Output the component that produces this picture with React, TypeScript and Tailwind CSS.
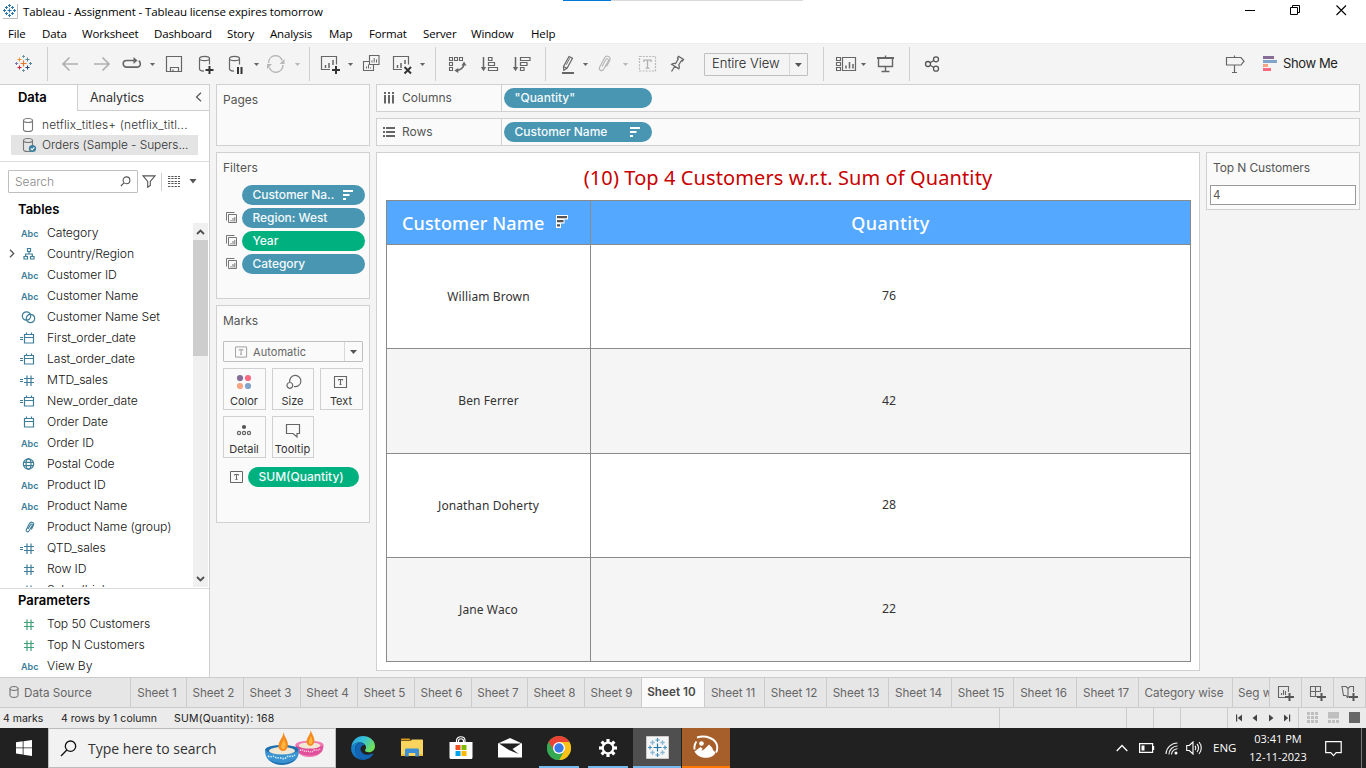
import type { ReactNode } from 'react';

/* ---------- shared pieces ---------- */

function Ico({ className = '', children, w = 24, h = 24 }: { className?: string; children: ReactNode; w?: number; h?: number }) {
  return (
    <svg width={w} height={h} viewBox={`0 0 ${w} ${h}`} fill="none" stroke="#666" strokeWidth="1.2" className={`shrink-0 ${className}`}>
      {children}
    </svg>
  );
}

function Caret({ className = '', color = '#666' }: { className?: string; color?: string }) {
  return (
    <svg width="8" height="24" viewBox="0 0 8 24" className={`shrink-0 ${className}`}>
      <path d="M1.9 11h5.2L4.5 14z" fill={color} />
    </svg>
  );
}

function Sep({ className }: { className: string }) {
  return <div className={`h-[34px] w-px shrink-0 bg-[#cfcfcf] ${className}`} />;
}

function SortBars({ className = '' }: { className?: string }) {
  return (
    <svg width="10" height="10" viewBox="0 0 10 10" className={`shrink-0 ${className}`} fill="#fff">
      <path d="M0 0h10v2H0zM0 4h6.5v2H0zM0 8h3v2H0z" />
    </svg>
  );
}

const plus = (x: number, y: number, s: number, color: string, c: string, w = 1) => (
  <path key={c} d={`M${x - s} ${y}h${2 * s}M${x} ${y - s}v${2 * s}`} stroke={color} strokeWidth={w} />
);

/* ---------- window chrome ---------- */

function TitleBar() {
  return (
    <div className="relative flex h-[23px] shrink-0 items-center bg-white">
      <div className="absolute left-[563px] top-0 h-px w-[48px] bg-[#0078d7]" />
      <div className="absolute left-[611px] top-0 h-px w-[192px] bg-[#d9d9d9]" />
      <svg width="15" height="15" viewBox="0 0 15 15" className="ml-[3px] shrink-0" fill="none">
        <path d="M0 14.5h14.5V0" stroke="#bbb" />
        {plus(6.5, 6.5, 2, '#2f76a8', 'a', 1.2)}
        {plus(6.5, 1.5, 1.5, '#2f76a8', 'b')}
        {plus(6.5, 11.5, 1.5, '#2f76a8', 'c')}
        {plus(1.5, 6.5, 1.5, '#2f76a8', 'd')}
        {plus(11.5, 6.5, 1.5, '#2f76a8', 'e')}
        {plus(3.5, 3.5, 1.5, '#2f76a8', 'f')}
        {plus(9.5, 3.5, 1.5, '#2f76a8', 'g')}
        {plus(3.5, 9.5, 1.5, '#2f76a8', 'h')}
        {plus(9.5, 9.5, 1.5, '#2f76a8', 'i')}
      </svg>
      <span className="ml-[5px] whitespace-nowrap text-[11.5px] tracking-[-0.11px] text-black">
        Tableau - Assignment - Tableau license expires tomorrow
      </span>
      <svg width="104" height="12" viewBox="0 0 104 12" className="mb-[3px] ml-auto mr-[18px] shrink-0" fill="none" stroke="#000">
        <path d="M1 6.5h10" />
        <path d="M46.5 3.5h7v7h-7zM48.5 3.5v-2h7v7h-2" />
        <path d="M92.5 1.5l9.500 9.500M102 1.500l-9.500 9.500" strokeWidth="1.100" />
      </svg>
    </div>
  );
}

function MenuBar() {
  return (
    <div className="flex h-[20px] shrink-0 items-center bg-white pl-[8px] pt-px text-[11.5px] tracking-[-0.15px] text-black">
      <span className="w-[34px]">File</span>
      <span className="w-[40px]">Data</span>
      <span className="w-[72px]">Worksheet</span>
      <span className="w-[73px]">Dashboard</span>
      <span className="w-[43px]">Story</span>
      <span className="w-[59px]">Analysis</span>
      <span className="w-[40px]">Map</span>
      <span className="w-[54px]">Format</span>
      <span className="w-[48px]">Server</span>
      <span className="w-[60px]">Window</span>
      <span>Help</span>
    </div>
  );
}

const cylinder = 'M5.500 6.500c0-1.400 2.400-2.200 5-2.200s5 .8 5 2.200-2.400 2.200-5 2.200-5-.8-5-2.200zM5.500 6.500v10.500c0 1.100 1.800 2 4.500 2.100M15.500 6.500v6';

function Toolbar() {
  return (
    <div className="flex h-[41px] shrink-0 items-center border-t border-[#eee] bg-[#f4f4f4]">
      <Ico className="ml-[11px]">
        {plus(12.5, 11.5, 3, '#e8762d', 'a', 1.2)}
        {plus(8.5, 7.5, 2, '#eb9136', 'b')}
        {plus(16.5, 7.5, 2, '#5b879b', 'c')}
        {plus(8.5, 15.5, 2, '#c72035', 'd')}
        {plus(16.5, 15.5, 2, '#1f447e', 'e')}
        {plus(12.5, 4.5, 1.5, '#7199a6', 'f')}
        {plus(12.5, 18.5, 1.5, '#7199a6', 'g')}
        {plus(5.5, 11.5, 1.5, '#7a77b0', 'h')}
        {plus(19.5, 11.5, 1.500, '#59879b', 'i')}
      </Ico>
      <Sep className="ml-[12px]" />
      <Ico className="ml-[10px]"><path d="M20 12H5M11.500 5.500L5 12l6.500 6.500" stroke="#b0b0b0" strokeWidth="1.700" /></Ico>
      <Ico className="ml-[8px]"><path d="M4 12h15M12.500 5.500L19 12l-6.500 6.500" stroke="#b0b0b0" strokeWidth="1.700" /></Ico>
      <Ico className="ml-[6px]">
        <path d="M15.500 8.500H6.500a3.300 3.300 0 0 0 0 6.600h11a3 3 0 0 0 2.800-3.300c0-1.400-.6-2.400-1.600-3" strokeWidth="1.600" />
        <path d="M13.500 5v7l4-3.500z" fill="#666" stroke="none" />
      </Ico>
      <Caret className="ml-[4px]" />
      <Ico className="ml-[6px]">
        <path d="M4.500 4.500h15v15h-15z" />
        <path d="M8.500 19.500v-4h8v4M11 19.500v-2" />
      </Ico>
      <Ico className="ml-[8px]">
        <path d={cylinder} />
        <path d="M11.500 18h8M15.500 14v8" stroke="#333" strokeWidth="2" />
      </Ico>
      <Ico className="ml-[6px]">
        <path d={cylinder} />
        <path d="M14 15v7M17.500 15v7" stroke="#333" strokeWidth="2" />
      </Ico>
      <Caret className="ml-[4px]" />
      <Ico className="ml-[4px]">
        <path d="M4.600 11a7 7 0 0 1 13.600-2.600M18.900 13a7 7 0 0 1-13.600 2.600" stroke="#b8b8b8" strokeWidth="1.500" />
        <path d="M20.500 7v5h-5zM3 17v-5h5z" fill="#b8b8b8" stroke="none" />
      </Ico>
      <Caret className="ml-[5px]" color="#b8b8b8" />
      <Sep className="ml-[8px]" />
      <Ico className="ml-[8px]">
        <path d="M12 17.500H3.500v-13h15v8" />
        <path d="M7.500 16v-3M11 16v-5M15 13V8" strokeWidth="1.500" />
        <path d="M14 18h8M18 14v8" stroke="#333" strokeWidth="2" />
      </Ico>
      <Caret className="ml-[4px]" />
      <Ico className="ml-[5px]">
        <path d="M10.500 3.500h9.500v9h-9.500zM10 9.500H4.500v9h10V13" strokeWidth="1.100" />
        <path d="M13 10.500V8.500M15.200 10.500V6M17.500 10.500V7.500M7.500 16.500v-2M9.500 16.500v-4M11.500 16.500v-1" strokeWidth="1" />
      </Ico>
      <Ico className="ml-[7px]">
        <path d="M12 17.500H3.500v-13h15v8" />
        <path d="M7.500 16v-3M11 16v-5M15 12V8" strokeWidth="1.500" />
        <path d="M14.500 15l6.500 6.500M21 15l-6.500 6.500" stroke="#333" strokeWidth="2" />
      </Ico>
      <Caret className="ml-[4px]" />
      <Sep className="ml-[9px]" />
      <Ico className="ml-[9px]">
        <path d="M4.500 5.500h3v3h-3zM9.500 5.500h3v3h-3zM14.500 5.500h3v3h-3zM4.500 10.500h3v3h-3zM4.500 15.500h3v3h-3z" strokeWidth="1.100" />
        <path d="M11 18.500c4 0 8-2.500 8-7" strokeWidth="1.500" />
        <path d="M13.300 16v5l-4-2.500zM16.500 13.500h5l-2.500-4z" fill="#666" stroke="none" />
      </Ico>
      <Ico className="ml-[9px]">
        <path d="M5.500 5v12" strokeWidth="1.500" />
        <path d="M2.800 15h5.400l-2.700 4.300z" fill="#666" stroke="none" />
        <path d="M10.500 5.500h3.500v3h-3.500zM10.500 10.500h6v3h-6zM10.500 15.500h9v3h-9z" />
      </Ico>
      <Ico className="ml-[8px]">
        <path d="M5.500 5v12" strokeWidth="1.500" />
        <path d="M2.800 15h5.400l-2.700 4.300z" fill="#666" stroke="none" />
        <path d="M10.500 5.500h9.500v3h-9.500zM10.500 10.500h6.500v3h-6.500zM10.500 15.500h3.500v3h-3.500z" />
      </Ico>
      <Sep className="ml-[11px]" />
      <Ico className="ml-[10px]">
        <path d="M7.500 14.500l5.500-10 3.500 1.800-5.500 10-3.200 2zM7.500 14.500l3.500 1.800" />
        <path d="M10.200 12.800l3.600-6.600" strokeWidth=".9" />
        <path d="M6 21h12" strokeWidth="2" />
      </Ico>
      <Caret className="ml-[1px]" />
      <Ico className="ml-[4px]">
        <path d="M9 14.500l3.700-6.700c1.200-2 3.600-.7 2.600 1.300l-4.600 8c-1.900 3-5.500 1-4-2L11.500 6c2-3.500 7-1.200 5.300 2.400L13.500 14.500" stroke="#b8b8b8" strokeWidth="1.200" />
      </Ico>
      <Caret className="ml-[4px]" color="#b8b8b8" />
      <Ico className="ml-[6px]">
        <path d="M4.500 4.500h16v14.500h-16z" stroke="#b8b8b8" strokeDasharray="2 1.200" />
        <path d="M9 10V8.200h7V10M12.500 8.200v8M10.500 16.200h4" stroke="#b0b0b0" strokeWidth="1.300" />
      </Ico>
      <Ico className="ml-[6px]">
        <path d="M13.500 4.300l5 3.200-1 1.400-.9-.4-2.800 4.200c.8 1.600.6 2.900 0 4.200L6.600 12.300c1.200-.8 2.400-1.200 4-.8l2.600-4.400-.7-1.200zM9.700 14.500L6.500 19.500" strokeWidth="1.300" />
      </Ico>
      <div className="ml-[15px] flex h-[23px] w-[104px] shrink-0 items-center rounded-[1px] border border-[#bfbfbf]">
        <span className="w-[85px] whitespace-nowrap pl-[7px] text-[13px] font-light text-[#222]">Entire View</span>
        <span className="h-full w-px bg-[#d8d8d8]" />
        <svg width="17" height="21" viewBox="0 0 17 21"><path d="M5 9h7l-3.500 4z" fill="#555" /></svg>
      </div>
      <Sep className="ml-[15px]" />
      <Ico className="ml-[10px]">
        <path d="M2.500 5.500h4v3h-4zM2.500 10.500h4v3h-4zM2.500 15.500h4v3h-4z" strokeWidth="1.100" />
        <path d="M8.500 5.500h13v13H8.500z" />
        <path d="M12 16.500v-3M15.500 16.500v-6.500M19 16.500V12" strokeWidth="1.500" />
      </Ico>
      <Caret className="ml-[1px]" />
      <Ico className="ml-[6px]">
        <path d="M4 6h17" strokeWidth="2" />
        <path d="M5.500 6v8.500h14V6M12.500 3.500V5M12.500 14.500V19M8.500 19.500h8" strokeWidth="1.400" />
      </Ico>
      <Sep className="ml-[12px]" />
      <Ico className="ml-[10px]">
        <g stroke="#555" strokeWidth="1.300">
          <circle cx="8" cy="12" r="2.500" /><circle cx="16" cy="7.300" r="2.500" /><circle cx="16" cy="16.700" r="2.500" />
          <path d="M10.200 10.700l3.600-2.200M10.200 13.300l3.600 2.200" />
        </g>
      </Ico>
      <Ico className="ml-[279px]">
        <path d="M3.500 5.500h14.500l3 3.700-3 3.800H3.500zM11.500 3.500v2M11.500 13v7.500M9 20.500h5" />
      </Ico>
      <svg width="24" height="24" viewBox="0 0 24 24" className="ml-[13px] shrink-0">
        <path d="M3 4h11v3H3z" fill="#856d96" /><path d="M3 8h14v3H3z" fill="#82a4cb" />
        <path d="M3 12h5v3H3z" fill="#f7a582" /><path d="M3 16h8v3H3z" fill="#fb6a80" />
      </svg>
      <span className="ml-[-1px] whitespace-nowrap text-[13px] tracking-[-0.38px] text-[#222]">Show Me</span>
    </div>
  );
}

/* ---------- data pane ---------- */

type Kind = 'abc' | 'geo' | 'set' | 'cdate' | 'cnum' | 'date' | 'globe' | 'clip' | 'num';

function FieldIcon({ kind, color = '#3e7e98' }: { kind: Kind; color?: string }) {
  if (kind === 'abc')
    return <span className="w-[19px] pl-px pt-[2px] text-[9px] font-semibold text-[#3e7e98]">Abc</span>;
  return (
    <svg width="19" height="16" viewBox="0 0 19 16" fill="none" stroke={color} strokeWidth="1.200" className="shrink-0">
      {(kind === 'cdate' || kind === 'cnum') && <path d="M0 7.500h3M0 9.500h3" strokeWidth="1" />}
      {(kind === 'date' || kind === 'cdate') && <path d="M4.500 4.500h9v8.500h-9zM4.500 7.500h9M6.500 2.500v2M11.500 2.500v2" />}
      {(kind === 'num' || kind === 'cnum') && <path d="M4 6.500h10M4 10.500h10M7 3.500v10.500M11 3.500v10.500" />}
      {kind === 'geo' && <path d="M7.500 2.500h3v3h-3zM4 10.500h3.500v2.500H4zM10.500 10.500H14v2.500h-3.500zM9 5.500v2.500M5.700 10.500V8h6.600v2.500" />}
      {kind === 'set' && <><circle cx="6.500" cy="7" r="4.200" /><circle cx="10.500" cy="9.500" r="4.200" /></>}
      {kind === 'globe' && <><circle cx="8.500" cy="8" r="5.200" /><ellipse cx="8.500" cy="8" rx="2.500" ry="5.200" /><path d="M4 6.300h9M4 9.700h9" /></>}
      {kind === 'clip' && <path d="M8 10l2.500-4.300c.8-1.300 2.300-.5 1.700.8L9.200 11.800c-1.300 2-3.800.6-2.800-1.400l3-5.800c1.600-2.700 5.200-1 4 1.700l-2 4.200" strokeWidth="1.100" />}
    </svg>
  );
}

const FIELDS: [Kind, string][] = [
  ['abc', 'Category'], ['geo', 'Country/Region'], ['abc', 'Customer ID'], ['abc', 'Customer Name'],
  ['set', 'Customer Name Set'], ['cdate', 'First_order_date'], ['cdate', 'Last_order_date'], ['cnum', 'MTD_sales'],
  ['cdate', 'New_order_date'], ['date', 'Order Date'], ['abc', 'Order ID'], ['globe', 'Postal Code'],
  ['abc', 'Product ID'], ['abc', 'Product Name'], ['clip', 'Product Name (group)'], ['cnum', 'QTD_sales'],
  ['num', 'Row ID'], ['num', 'Sales (bin)'],
];

function Field({ kind, name, color }: { kind: Kind; name: string; color?: string }) {
  return (
    <div className="flex h-[21px] shrink-0 items-center">
      <div className="w-[20px] shrink-0 pl-[8px]">
        {kind === 'geo' && <svg width="8" height="9" viewBox="0 0 8 9"><path d="M2 .8l3.700 3.700L2 8.200" fill="none" stroke="#555" strokeWidth="1.300" /></svg>}
      </div>
      <FieldIcon kind={kind} color={color} />
      <span className="ml-[8px] whitespace-nowrap pt-[2px] text-[12.2px] font-light tracking-[-0.08px] text-[#111]">{name}</span>
    </div>
  );
}

function DbIcon({ checked = false }: { checked?: boolean }) {
  return (
    <svg width="15" height="16" viewBox="0 0 15 16" fill="none" stroke="#777" strokeWidth="1.100" className="shrink-0">
      <path d="M1.500 3.500c0-1.300 2-2 4.500-2s4.500.7 4.500 2-2 2-4.500 2-4.500-.7-4.500-2zM1.500 3.500v9c0 1.300 2 2 4.500 2s4.500-.7 4.500-2v-9" />
      {checked && <><circle cx="10.500" cy="11.500" r="3.600" fill="#3b7f9f" stroke="none" /><path d="M8.800 11.500l1.300 1.300 2.200-2.500" stroke="#fff" /></>}
    </svg>
  );
}

function DataPane() {
  return (
    <aside className="flex w-[210px] shrink-0 flex-col overflow-hidden border-r border-t border-[#cfcfcf] bg-white">
      <div className="flex h-[26px] shrink-0">
        <div className="flex w-[77px] items-center pl-[18px] text-[13px] font-semibold tracking-[-0.1px] text-black">Data</div>
        <div className="flex flex-1 items-center justify-between border-b border-l border-[#cfcfcf] bg-[#fafafa] pl-[12px] pr-[7px] pt-px text-[12.5px] text-[#333]">
          Analytics
          <svg width="7" height="10" viewBox="0 0 7 10" className="mb-[2px]"><path d="M6 .8L1.500 5 6 9.200" fill="none" stroke="#555" strokeWidth="1.200" /></svg>
        </div>
      </div>
      <div className="mt-[4px] flex h-[20px] shrink-0 items-center pl-[22px] text-[11.9px] text-[#333]">
        <DbIcon /><span className="ml-[5px] whitespace-nowrap font-light tracking-[0.16px]">netflix_titles+ (netflix_titl...</span>
      </div>
      <div className="ml-[11px] flex h-[20px] w-[187px] shrink-0 items-center bg-[#e4e4e4] pl-[11px] text-[11.9px] text-[#333]">
        <DbIcon checked /><span className="ml-[5px] whitespace-nowrap font-light tracking-[-0.04px]">Orders (Sample - Supers...</span>
      </div>
      <div className="mt-[6px] h-px shrink-0 bg-[#dcdcdc]" />
      <div className="mt-[8px] flex h-[23px] shrink-0 items-center pl-[8px]">
        <div className="flex h-[23px] w-[130px] items-center justify-between rounded-[1px] border border-[#bfbfbf] pl-[6px] pr-[6px] text-[12px] font-light text-[#888]">
          Search
          <svg width="11" height="11" viewBox="0 0 11 11" fill="none" stroke="#555" strokeWidth="1.100"><circle cx="6.500" cy="4.300" r="3.400" /><path d="M4 6.800L.8 10" /></svg>
        </div>
        <svg width="14" height="13" viewBox="0 0 14 13" fill="none" stroke="#555" strokeWidth="1.100" className="ml-[4px]"><path d="M1 .9h12L8.300 6.500v4l-2.600 1.800V6.500z" /></svg>
        <div className="ml-[5px] h-[18px] w-px bg-[#cfcfcf]" />
        <svg width="12" height="11" viewBox="0 0 12 11" stroke="#555" className="mb-px ml-[6px]"><path d="M0 .5h12M0 2.500h12M0 5.500h12M0 7.500h12M0 10.500h12" strokeDasharray="2.300 1" /></svg>
        <svg width="8" height="5" viewBox="0 0 8 5" className="ml-[9px]"><path d="M.5 0h7L4 4.500z" fill="#555" /></svg>
      </div>
      <div className="mt-[8px] flex h-[18px] shrink-0 items-center pl-[18px] text-[13px] font-semibold text-black">Tables</div>
      <div className="mt-[4px] flex h-[364px] shrink-0 overflow-hidden">
        <div className="-mt-px flex flex-1 flex-col overflow-hidden">
          {FIELDS.map(([k, n]) => <Field key={n} kind={k} name={n} />)}
        </div>
        <div className="mr-px flex w-[15px] shrink-0 flex-col bg-[#f0f0f0]">
          <div className="flex h-[17px] items-center justify-center"><svg width="9" height="6" viewBox="0 0 9 6"><path d="M1 5l3.500-3.500L8 5" fill="none" stroke="#505050" strokeWidth="1.800" /></svg></div>
          <div className="h-[116px] bg-[#cdcdcd]" />
          <div className="mt-auto flex h-[17px] items-center justify-center"><svg width="9" height="6" viewBox="0 0 9 6"><path d="M1 1l3.500 3.500L8 1" fill="none" stroke="#505050" strokeWidth="1.800" /></svg></div>
        </div>
      </div>
      <div className="mt-px h-px shrink-0 bg-[#dcdcdc]" />
      <div className="mt-[3px] flex h-[18px] shrink-0 items-center pl-[18px] text-[13px] font-semibold text-black">Parameters</div>
      <div className="mt-[3px]">
        <Field kind="num" name="Top 50 Customers" color="#3fa07a" />
        <Field kind="num" name="Top N Customers" color="#3fa07a" />
        <Field kind="abc" name="View By" />
      </div>
    </aside>
  );
}

/* ---------- shelves ---------- */

const SHELF = 'border border-[#d0d0d0] bg-[#fafafa]';

function Pill({ text, className, sorted = false }: { text: string; className: string; sorted?: boolean }) {
  return (
    <div className={`flex h-[20px] shrink-0 items-center justify-between whitespace-nowrap rounded-full pl-[10.5px] pr-[12px] text-[12px] font-medium text-[#f4fafc] ${className}`}>
      {text}
      {sorted && <SortBars />}
    </div>
  );
}

function FilterRow({ text, className, context = true, sorted = false }: { text: string; className: string; context?: boolean; sorted?: boolean }) {
  return (
    <div className="flex items-center">
      <svg width="12" height="12" viewBox="0 0 12 12" fill="none" stroke="#777" className="ml-[9px] mr-[4px] shrink-0">
        {context && <path d="M.5 8.500v-8h8M2.500 10.500v-8h8v8H2.500M5 9.500V8M7 9.500V6M8.800 9.500V5" />}
      </svg>
      <Pill text={text} sorted={sorted} className={`w-[123px] tracking-[-0.05px] ${className}`} />
    </div>
  );
}

function TIcon({ className = '', w = 14, color = '#666' }: { className?: string; w?: number; color?: string }) {
  return (
    <svg width={w} height="12" viewBox="0 0 14 12" fill="none" stroke={color} className={`shrink-0 ${className}`}>
      <path d="M.5.5h12v11H.5z" />
      <path d="M4.500 4.500v-1h4v1M6.500 3.500v5M5.500 8.500h2" />
    </svg>
  );
}

function MarkButton({ label, children }: { label: string; children: ReactNode }) {
  return (
    <div className="flex h-[42px] flex-col items-center justify-between border border-[#d0d0d0] bg-[#fafafa] pr-px pt-[4px] text-[11px] leading-[15px] text-[#333]">
      <svg width="18" height="18" viewBox="0 0 18 18" fill="none" stroke="#666" strokeWidth="1.200" className="shrink-0">{children}</svg>
      {label}
    </div>
  );
}

function Cards() {
  return (
    <div className="ml-[6px] flex w-[154px] shrink-0 flex-col text-[12px] text-[#555]">
      <section className={`h-[62px] shrink-0 pl-[6px] pt-[6px] ${SHELF}`}>Pages</section>
      <section className={`mt-[6px] h-[147px] shrink-0 pt-[6px] ${SHELF}`}>
        <h3 className="pl-[6px] leading-[18px]">Filters</h3>
        <div className="mt-[8px] flex flex-col gap-[3px]">
          <FilterRow text="Customer Na.." context={false} sorted className="bg-[#4996b2]" />
          <FilterRow text="Region: West" className="bg-[#4996b2]" />
          <FilterRow text="Year" className="bg-[#00b180]" />
          <FilterRow text="Category" className="bg-[#4996b2]" />
        </div>
      </section>
      <section className={`mt-[6px] h-[218px] shrink-0 px-[6px] pt-[6px] ${SHELF}`}>
        <h3 className="leading-[18px]">Marks</h3>
        <div className="mt-[11px] flex h-[21px] w-[140px] items-center rounded-[1px] border border-[#bfbfbf] text-[11px] text-[#666]">
          <TIcon className="ml-[11px]" w={13} color="#999" />
          <span className="ml-[5px] flex-1 pt-px tracking-[0.05px]">Automatic</span>
          <span className="h-full w-px bg-[#d8d8d8]" />
          <svg width="17" height="19" viewBox="0 0 17 19"><path d="M5 8h7l-3.500 4z" fill="#555" /></svg>
        </div>
        <div className="mt-[6px] grid w-[140px] grid-cols-[43px_42px_43px] gap-[6px]">
          <MarkButton label="Color">
            <g stroke="none">
              <circle cx="5" cy="5" r="3.100" fill="#856d96" /><circle cx="13" cy="5" r="3.100" fill="#fb6a80" />
              <circle cx="5" cy="13" r="3.100" fill="#f7a582" /><circle cx="13" cy="13" r="3.100" fill="#82a4cb" />
            </g>
          </MarkButton>
          <MarkButton label="Size">
            <path d="M5.800 9.200a5.600 5.600 0 1 1 4.200 4.300M5.800 9.500a2.900 2.900 0 1 0 .1 0z" />
          </MarkButton>
          <MarkButton label="Text">
            <path d="M2.500 3.500h12v11h-12zM6.500 7.500v-1h4v1M8.500 6.500v5M7.500 11.500h2" strokeWidth="1.100" />
          </MarkButton>
          <MarkButton label="Detail">
            <circle cx="9" cy="6" r="2.100" fill="#555" stroke="none" />
            <circle cx="4" cy="12" r="1.600" /><circle cx="9" cy="12" r="1.600" /><circle cx="14" cy="12" r="1.600" />
          </MarkButton>
          <MarkButton label="Tooltip">
            <path d="M2.500 3.500h13v9h-2.500v3.500l-4-3.500h-6.500z" />
          </MarkButton>
        </div>
        <div className="mt-[9px] flex items-center">
          <TIcon className="ml-[7px]" />
          <Pill text="SUM(Quantity)" className="ml-[4px] w-[111px] bg-[#00b180]" />
        </div>
      </section>
    </div>
  );
}

function ShelfRow({ icon, label, children }: { icon: ReactNode; label: string; children: ReactNode }) {
  return (
    <div className={`flex h-[28px] shrink-0 items-center ${SHELF}`}>
      <div className="flex h-full w-[125px] shrink-0 items-center border-r border-[#d0d0d0] pl-[6px] text-[12px] text-[#555]">
        <svg width="13" height="12" viewBox="0 0 13 12" stroke="#666" fill="none" className="mr-[6px] shrink-0">{icon}</svg>
        {label}
      </div>
      <div className="ml-[2px] flex">{children}</div>
    </div>
  );
}

/* ---------- sheet ---------- */

const ROWS: [string, number][] = [['William Brown', 76], ['Ben Ferrer', 42], ['Jonathan Doherty', 28], ['Jane Waco', 22]];

function Sheet() {
  return (
    <div className="flex h-[519px] w-[824px] shrink-0 flex-col border border-[#d0d0d0] bg-white px-[9px] font-['Noto_Sans',sans-serif]">
      <h1 className="flex h-[47px] items-center justify-center pt-[3px] text-[20px] tracking-[0.1px] text-[#c80000]">
        (10) Top 4 Customers w.r.t. Sum of Quantity
      </h1>
      <div className="grid h-[462px] w-[805px] grid-cols-[203px_1fr] grid-rows-[43px_103px_104px_103px_103px] gap-px border border-[#8a8a8a] bg-[#8a8a8a]">
        <div className="flex items-center bg-[#55a8ff] pl-[15px] pt-px text-[18px] font-medium tracking-[0.13px] text-white">
          Customer Name
          <svg width="12" height="13" viewBox="0 0 12 13" className="mb-[3px] ml-[12px]">
            <path d="M0 0h12v4.500H8.500V8.500H5V13H0z" fill="#fff" />
            <path d="M1 1h10v2.200H1zM1 5h6.500v2.200H1zM1 9.300h3v2.200H1z" fill="#555" />
          </svg>
        </div>
        <div className="flex items-center justify-center bg-[#55a8ff] pt-px text-[18px] font-medium tracking-[0.4px] text-white">Quantity</div>
        {ROWS.map(([name, qty], i) => [
          <div key={name} className={`flex items-center justify-center text-[12px] tracking-[0.1px] text-[#333] ${i % 2 ? 'bg-[#f5f5f5]' : 'bg-white'}`}>{name}</div>,
          <div key={qty} className={`flex items-center justify-center pr-[3px] text-[12.3px] text-[#333] ${i % 2 ? 'bg-[#f5f5f5]' : 'bg-white'}`}>{qty}</div>,
        ])}
      </div>
    </div>
  );
}

function Workspace() {
  return (
    <main className="ml-[6px] flex w-[984px] shrink-0 flex-col gap-[6px]">
      <ShelfRow label="Columns" icon={<path d="M2 3v8.500M6 3v8.500M10 3v8.500M2 0v2M6 0v2M10 0v2" strokeWidth="2" />}>
        <Pill text={'"Quantity"'} className="w-[148px] bg-[#4996b2]" />
      </ShelfRow>
      <ShelfRow label="Rows" icon={<path d="M3 2H12M3 6H12M3 10H12M0 2h2M0 6h2M0 10h2" strokeWidth="2" />}>
        <Pill text="Customer Name" sorted className="w-[148px] bg-[#4996b2]" />
      </ShelfRow>
      <div className="flex gap-[6px]">
        <Sheet />
        <div className={`flex h-[58px] w-[154px] flex-col px-[3px] pt-[6px] text-[12px] text-[#555] ${SHELF}`}>
          <span className="pl-[3px] leading-[18px] tracking-[-0.12px]">Top N Customers</span>
          <div className="mt-[8px] flex h-[20px] items-center border border-[#999] bg-white pl-[2px] pt-px text-[11.5px]">4</div>
        </div>
      </div>
    </main>
  );
}

/* ---------- bottom bars ---------- */

const TABS: [string, string][] = [
  ['Sheet 1', 'w-[56px]'], ['Sheet 2', 'w-[57px]'], ['Sheet 3', 'w-[57px]'], ['Sheet 4', 'w-[57px]'], ['Sheet 5', 'w-[57px]'],
  ['Sheet 6', 'w-[57px]'], ['Sheet 7', 'w-[56px]'], ['Sheet 8', 'w-[57px]'], ['Sheet 9', 'w-[57px]'], ['Sheet 10', 'w-[63px]'],
  ['Sheet 11', 'w-[60px]'], ['Sheet 12', 'w-[62px]'], ['Sheet 13', 'w-[62px]'], ['Sheet 14', 'w-[63px]'], ['Sheet 15', 'w-[62px]'],
  ['Sheet 16', 'w-[63px]'], ['Sheet 17', 'w-[62px]'], ['Category wise', 'w-[94px]'],
];

function SheetTabs() {
  return (
    <div className="flex h-[31px] shrink-0 border-y border-[#cbcbcb] bg-[#e6e6e6] text-[11.7px] text-[#666]">
      <div className="flex w-[131px] shrink-0 items-center border-r border-[#cbcbcb] pl-[9px] pt-[2px]">
        <svg width="10" height="12" viewBox="0 0 10 12" fill="none" stroke="#666" className="mb-[4px] mr-[5px]"><path d="M1 2.500C1 1.200 2.500.6 5 .6s4 .6 4 1.900-1.500 1.900-4 1.900-4-.6-4-1.900zM1 2.500v7c0 1.200 1.500 1.900 4 1.900s4-.7 4-1.900v-7" /></svg>
        Data Source
      </div>
      {TABS.map(([t, w]) => (
        <div key={t} className={`flex shrink-0 items-center justify-center whitespace-nowrap border-r border-[#cbcbcb] pr-[3px] ${w} ${t === 'Sheet 10' ? 'bg-[#fafafa] font-semibold tracking-[0.05px] text-[#4a4a4a]' : 'pt-[2px] tracking-[-0.06px]'}`}>{t}</div>
      ))}
      <div className="flex w-[37px] shrink-0 items-center overflow-hidden whitespace-nowrap border-r border-[#cbcbcb] pl-[5px] pt-[2px]">Seg wise</div>
      {[
        <path key="a" d="M8 12.500H1.500v-11h10V7M4.500 10V8M6.500 10V5M8.500 10V6" />,
        <path key="b" d="M8 11.500H1.500v-10h10V7M1.500 6.500h10M6.500 1.500v10" />,
        <path key="c" d="M8 11.500l-1.500 1-1.500-2H2.500L1 1.500h4l2 2 2-2h3.500V7M7 3.500v9" />,
      ].map((p, i) => (
        <div key={i} className="flex w-[32px] shrink-0 items-center justify-center border-r border-[#cbcbcb] pt-px">
          <svg width="17" height="17" viewBox="0 0 17 17" fill="none" stroke="#666" strokeWidth="1.100">
            {p}
            <path d="M8 12h9M12.500 8v8" stroke="#555" strokeWidth="2" />
          </svg>
        </div>
      ))}
    </div>
  );
}

function StatusBar() {
  return (
    <div className="flex h-[20px] shrink-0 items-stretch bg-[#ebebeb] text-[10.5px] leading-[21px] text-[#222]">
      <span className="w-[58px] pl-[3px]">4 marks</span>
      <span className="w-[113px] whitespace-nowrap pl-[3px] tracking-[0.03px]">4 rows by 1 column</span>
      <span className="w-[829px] border-r border-[#cbcbcb] pl-[3px] tracking-[0.2px]">SUM(Quantity): 168</span>
      <span className="w-[127px] border-r border-[#cbcbcb]" />
      <span className="w-[27px] border-r border-[#cbcbcb]" />
      <span className="w-[27px] border-r border-[#cbcbcb]" />
      <span className="w-[47px] border-r border-[#cbcbcb]" />
      <span className="flex w-[71px] items-center border-r border-[#cbcbcb]">
        <svg width="70" height="10" viewBox="0 0 70 10" fill="#444">
          <path d="M8 1.500h1.200v7H8zM14 1.500v7L9.800 5zM29 1.500v7L24.500 5zM41 1.500v7L45.500 5zM56 1.500v7L60.200 5zM61 1.500h1.200v7H61z" />
        </svg>
      </span>
      <svg width="67" height="20" viewBox="0 0 67 20" fill="#bfbfbf">
        <path d="M8 4h3v3H8zM12 4h3v3h-3zM16 4h3v3h-3zM8 8h3v3H8zM12 8h3v3h-3zM16 8h3v3h-3zM8 12h3v3H8zM12 12h3v3h-3zM16 12h3v3h-3zM29 4h11v6.500H29zM29 12h3v3h-3zM33 12h3v3h-3zM37 12h3v3h-3z" />
        <path d="M50 4h11v11H50z" fill="#666" />
      </svg>
    </div>
  );
}

function Diya({ main, dark, light, className }: { main: string; dark: string; light: string; className: string }) {
  return (
    <svg width="34" height="34" viewBox="0 0 34 34" className={className}>
      <path d="M0 18c0-2 7-4 17-4s17 2 17 4c0 9-5 14-17 14S0 27 0 18z" fill={main} />
      <path d="M4 27c4 5 22 6 27-1-3 8-22 10-27 1z" fill={dark} />
      <ellipse cx="17" cy="17.500" rx="16.500" ry="4.500" fill={dark} />
      <ellipse cx="17" cy="18.800" rx="13" ry="3.700" fill="#f0e8d4" />
      <path d="M3 24c3 2 5-1 7 1s4 0 6 1 4 1 6-1 4 1 8-2" stroke={light} strokeWidth="1.600" strokeDasharray="1.500 1" fill="none" />
      <path d="M18.500 0c1 5 4.500 8 4.500 13-.4 4-2.400 6-5 6s-5-2.500-4.500-6c.6-4.500 4.500-7 5-13z" fill="#f58a1d" />
      <path d="M18.500 7c2 3.500 3 6 1.600 9-1.500 2-3.600 1-3.900-1-.3-3 1.800-4.500 2.300-8z" fill="#fdb640" />
    </svg>
  );
}

function TaskSlot({ className, children }: { className: string; children: ReactNode }) {
  return <div className={`flex h-full shrink-0 items-center justify-center ${className}`}>{children}</div>;
}

function Taskbar() {
  return (
    <div className="flex h-[40px] shrink-0 items-center bg-[#212121] text-white">
      <TaskSlot className="w-[48px]">
        <svg width="16" height="16" viewBox="0 0 16 16" fill="#fff"><path d="M0 2.200l6.700-.9v6.200H0zM7.500 1.200L16 0v7.500H7.500zM0 8.300h6.700v6.200L0 13.600zM7.500 8.300H16V16l-8.500-1.200z" /></svg>
      </TaskSlot>
      <div className="flex h-full w-[288px] shrink-0 items-center border border-[#bdbdbd] bg-[#f2f2f2] pl-[11px]">
        <svg width="17" height="17" viewBox="0 0 17 17" fill="none" stroke="#111" strokeWidth="1.300"><circle cx="10.500" cy="6.200" r="5.200" /><path d="M6.800 10L1 16" /></svg>
        <span className="ml-[11px] w-[176px] whitespace-nowrap text-[14px] tracking-[-0.02px] text-[#333]">Type here to search</span>
        <div className="relative h-[38px] w-[64px]">
          <Diya className="absolute left-[29px] top-[1px] h-[28px] w-[33px]" main="#e0509a" dark="#f27bb4" light="#ffd2e8" />
          <Diya className="absolute left-[1px] top-[3px] h-[34px] w-[34px]" main="#3a93d0" dark="#1f6fae" light="#c9ecff" />
        </div>
      </div>
      <TaskSlot className="ml-[3px] w-[48px]">
        <svg width="24" height="24" viewBox="0 0 24 24">
          <defs>
            <linearGradient id="edgeTop" x1="0" y1="0" x2="1" y2=".5"><stop offset="0" stopColor="#2b9fe0" /><stop offset=".5" stopColor="#35c1d8" /><stop offset="1" stopColor="#6fe05a" /></linearGradient>
            <linearGradient id="edgeLow" x1="0" y1="0" x2="1" y2="1"><stop offset="0" stopColor="#1b8fd8" /><stop offset="1" stopColor="#0c59a4" /></linearGradient>
          </defs>
          <path d="M.3 11C1 4.500 6 0 12 0c6.500 0 12 4.500 12 10 0 4-3 6.300-6.300 6.300-2.300 0-3.700-.9-3.700-1.700 0-.9 1-1.300 1-3.300 0-2.700-2.700-4.800-6-4.800C5 6.500 1.500 8.500.3 11z" fill="url(#edgeTop)" />
          <path d="M.2 11.500C1.200 8 5 6.500 8.500 6.500c-3 1.300-4.300 4-4.300 6.700C4.200 18 8 22 12.500 23.900 5.500 24.300-.6 18.500.2 11.500z" fill="url(#edgeLow)" />
          <path d="M12.500 23.900C7 22.500 3.500 18 4.200 13 4.700 9.500 6.500 7.500 8.500 6.500c2.500-.1 4.600 1 5.700 2.500-2.700-.2-4.700 1.500-4.700 4 0 3.500 3.500 5.800 7.500 5.800 1.800 0 3.300-.5 4.600-1.200.6-.3 1 .1.600.7-1.700 3-5.200 5.500-9.700 5.600z" fill="#1264b5" />
        </svg>
      </TaskSlot>
      <TaskSlot className="ml-[1px] w-[48px]">
        <svg width="22" height="20" viewBox="0 0 22 20">
          <path d="M0 1.500C0 .7.500.4 1 .4h7.500L10 2.500H0z" fill="#d99a1c" />
          <path d="M0 3h9.500L11 1.500h10c.6 0 1 .4 1 1V17c0 .6-.4 1-1 1H1c-.6 0-1-.4-1-1z" fill="#fbd45e" />
          <path d="M4 12c0-.8.6-1.500 1.500-1.500h11c.9 0 1.500.7 1.500 1.500v6.500h-3.700V15H7.700v3.500H4z" fill="#3c8fd6" />
          <path d="M0 16.500h4V18H0zM18 16.500h4V18h-4z" fill="#f2b632" />
        </svg>
      </TaskSlot>
      <TaskSlot className="ml-[1px] w-[48px]">
        <svg width="24" height="24" viewBox="0 0 24 24">
          <path d="M7.500 6.500V4.500c0-5 8.500-5 8.500 0v2M9.500 6V5c0-3 5-3 5 0v1" fill="none" stroke="#fff" strokeWidth="1.200" />
          <path d="M.5 6h23v15.500c0 .8-.6 1.500-1.500 1.500H2c-.9 0-1.500-.7-1.500-1.500z" fill="#fff" />
          <path d="M6.500 9h5v5h-5z" fill="#f25022" /><path d="M12.500 9h5v5h-5z" fill="#7fba00" /><path d="M6.500 15h5v5h-5z" fill="#00a4ef" /><path d="M12.500 15h5v5h-5z" fill="#ffb900" />
        </svg>
      </TaskSlot>
      <TaskSlot className="ml-[1px] w-[48px]">
        <svg width="24" height="20" viewBox="0 0 24 20">
          <path d="M0 5.500L12 0l12 5.500V19.500H0z" fill="#fff" />
          <path d="M1 5.500H23L14.500 11l6 5L11 12z" fill="#212121" />
        </svg>
      </TaskSlot>
      <TaskSlot className="relative ml-[1px] w-[48px]">
        <svg width="24" height="24" viewBox="0 0 24 24">
          <circle cx="12" cy="12" r="12" fill="#4caf50" />
          <path d="M12 12L1.600 6A12 12 0 0 1 22.400 6z" fill="#ea4335" />
          <path d="M1.600 6L7 15l5-3V6z" fill="#ea4335" />
          <path d="M12 6h10.400A12 12 0 0 1 12 24l5.200-9z" fill="#fbc116" />
          <path d="M12 24l5.200-9H6.800L1.600 6A12 12 0 0 0 12 24z" fill="#34a853" />
          <circle cx="12" cy="12" r="6" fill="#fff" /><circle cx="12" cy="12" r="4.700" fill="#3b78e7" />
        </svg>
        <div className="absolute bottom-0 left-[4px] h-[2px] w-[40px] bg-[#76b9ed]" />
      </TaskSlot>
      <TaskSlot className="relative ml-[1px] w-[48px]">
        <svg width="20" height="20" viewBox="-10 -10 20 20" fill="none" stroke="#fff">
          <circle r="5.300" strokeWidth="2.200" />
          {[0, 45, 90, 135, 180, 225, 270, 315].map((a) => <path key={a} d="M0-5.800v-3.200" strokeWidth="3.200" transform={`rotate(${a})`} />)}
        </svg>
        <div className="absolute bottom-0 left-[4px] h-[2px] w-[40px] bg-[#76b9ed]" />
      </TaskSlot>
      <TaskSlot className="ml-[1px] w-[48px] border-b-2 border-[#76b9ed] bg-[#4f4f4f]">
        <svg width="23" height="23" viewBox="0 0 23 23" fill="none">
          <path d="M.5.500h22v22H.5z" fill="#f6f6f6" stroke="#ccc" />
          {plus(11.500, 11.500, 4, '#1f77a8', 'a', 1.200)}
          {plus(11.500, 4, 2, '#4a93bb', 'b', 1.200)}
          {plus(11.500, 19, 2, '#4a93bb', 'c', 1.200)}
          {plus(4, 11.500, 2, '#4a93bb', 'd', 1.200)}
          {plus(19, 11.500, 2, '#4a93bb', 'e', 1.200)}
          {plus(6.500, 6.500, 2.200, '#8db9d2', 'f', 1.400)}
          {plus(16.500, 6.500, 2.200, '#8db9d2', 'g', 1.400)}
          {plus(6.500, 16.500, 2.200, '#8db9d2', 'h', 1.400)}
          {plus(16.500, 16.500, 2.200, '#8db9d2', 'i', 1.400)}
        </svg>
      </TaskSlot>
      <TaskSlot className="ml-[1px] w-[48px] border-b-2 border-[#ff7800] bg-[#a65f2a]">
        <svg width="26" height="24" viewBox="0 0 26 24">
          <path d="M4 2.500C12 0 24 3 24.300 12.500c0 2-.3 3.500-1.300 5M3.500 6.500C1.500 9 1 12 1.700 14.500" fill="none" stroke="#fff" strokeWidth="1.900" />
          <circle cx="8.500" cy="8.500" r="2.300" fill="#fff" />
          <path d="M1.500 16.500l6-4.500 2 1.500-1 2.500 3-2 4.500-4.500 3 3 1 2.500 2.500 2.500C20 24.500 6 25 1.500 16.500z" fill="#fff" />
        </svg>
      </TaskSlot>
      <div className="ml-auto flex h-full items-center">
        <svg width="12" height="8" viewBox="0 0 12 8"><path d="M.7 7L6 1.500 11.300 7" fill="none" stroke="#fff" strokeWidth="1.300" /></svg>
        <svg width="16" height="10" viewBox="0 0 16 10" className="ml-[11px]"><path d="M.6.600h13v8.800H.6zM14.600 3v4" fill="none" stroke="#fff" strokeWidth="1.200" /><path d="M2.500 2.500h3v5h-3z" fill="#fff" /></svg>
        <svg width="13" height="13" viewBox="0 0 13 13" fill="none" stroke="#eee" strokeWidth="1.100" className="ml-[10px]">
          <path d="M1 12A11.500 11.500 0 0 1 12.500 1M4 12.500A8.500 8.500 0 0 1 12.500 4M6.500 12.500a6 6 0 0 1 6-5.700" /><circle cx="11" cy="11" r="1.500" fill="#fff" stroke="none" />
        </svg>
        <svg width="17" height="14" viewBox="0 0 17 14" fill="none" stroke="#fff" strokeWidth="1.100" className="ml-[8px]">
          <path d="M.7 4.500h2.600L7 1v12L3.300 9.500H.7zM9 5c1 1 1 3 0 4M11 3c2 2 2 6 0 8M13 1c3 3.300 3 8.700 0 12" />
        </svg>
        <span className="ml-[10px] w-[36px] text-[11.5px]">ENG</span>
        <div className="w-[58px] pb-px text-center text-[11px] leading-[18px]">
          <div>03:41 PM</div>
          <div>12-11-2023</div>
        </div>
        <svg width="17" height="17" viewBox="0 0 17 17" className="ml-[18px]"><path d="M.7 1.700h15.500v11h-5l-2.700 3-2.700-3H.7z" fill="none" stroke="#fff" strokeWidth="1.200" /></svg>
        <div className="ml-[19px] mr-[4px] h-full w-px bg-[#777]" />
      </div>
    </div>
  );
}

export default function App() {
  return (
    <div className="flex h-[768px] w-[1366px] flex-col overflow-hidden bg-[#f4f4f4] font-['Open_Sans',sans-serif]">
      <TitleBar />
      <MenuBar />
      <div className="flex min-h-0 flex-1 flex-col font-['Inter',sans-serif]">
        <Toolbar />
        <div className="flex h-[593px] shrink-0">
          <DataPane />
          <Cards />
          <Workspace />
        </div>
        <SheetTabs />
        <StatusBar />
      </div>
      <Taskbar />
    </div>
  );
}
